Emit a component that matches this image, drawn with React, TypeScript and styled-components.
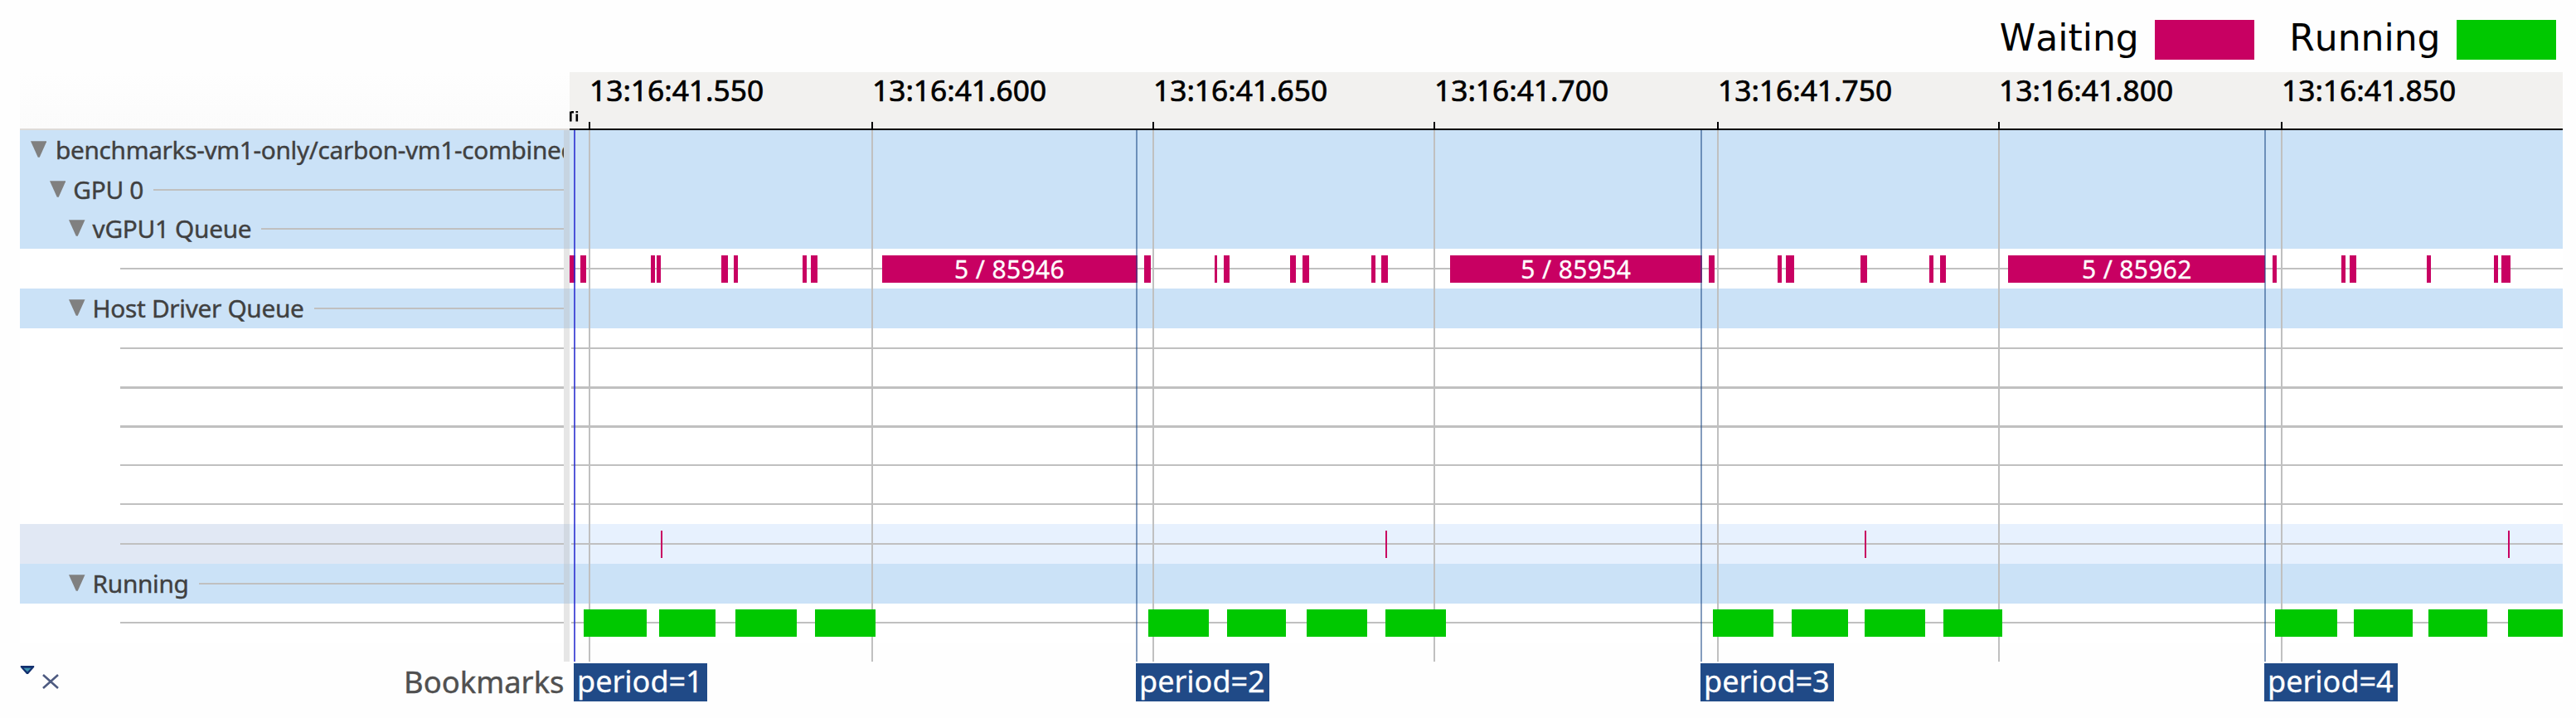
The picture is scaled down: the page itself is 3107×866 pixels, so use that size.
import React from 'react';
import styled, { createGlobalStyle } from 'styled-components';

type Span = [start: number, end: number, label?: string];

interface RowData {
    height: number;
    tone?: 'group' | 'selected';
    level?: number;
    name?: string;
    kind?: 'waiting' | 'running';
    spans?: Span[];
}

const CHART_LEFT = 687;

const WAITING = '#c80062';
const RUNNING = '#00c800';

const TICKS = [
    { at: 711, label: '13:16:41.550' },
    { at: 1052, label: '13:16:41.600' },
    { at: 1391, label: '13:16:41.650' },
    { at: 1730, label: '13:16:41.700' },
    { at: 2072, label: '13:16:41.750' },
    { at: 2411, label: '13:16:41.800' },
    { at: 2752, label: '13:16:41.850' },
];

const BOOKMARKS = [
    { at: 692, label: 'period=1' },
    { at: 1370, label: 'period=2' },
    { at: 2051, label: 'period=3' },
    { at: 2731, label: 'period=4' },
];

const VGPU_SPANS: Span[] = [
    [687, 694], [699.5, 707], [784.5, 789.5], [792, 797], [870, 878], [885, 890],
    [968, 973], [978, 985.5], [1063.5, 1371.5, '5 / 85946'],
    [1380, 1387.5], [1465.3, 1467.7], [1475.5, 1483], [1555.5, 1563], [1571, 1578.5],
    [1654, 1659], [1666, 1674], [1749, 2052.5, '5 / 85954'],
    [2060.5, 2068], [2143.5, 2148.5], [2153.5, 2163.5], [2244, 2251.5], [2327, 2332],
    [2339.5, 2347], [2422.4, 2732.5, '5 / 85962'],
    [2741, 2745.7], [2824, 2829], [2834.4, 2842.3], [2927, 2932], [3007.5, 3012.5], [3017, 3027.5],
];

const HOST_SPANS: Span[] = [
    [797.4, 799.4], [1671.4, 1673.4], [2249, 2251], [3025.4, 3027.4],
];

const RUNNING_SPANS: Span[] = [
    [704, 780.3], [795, 863], [887, 961.3], [983, 1056],
    [1385, 1458], [1480, 1551.4], [1576, 1649], [1671, 1744],
    [2066, 2139], [2161, 2229.4], [2249, 2322], [2344.4, 2415],
    [2743.5, 2819], [2839, 2910], [2929.4, 3000.4], [3025.4, 3091],
];

const ROWS: RowData[] = [
    { height: 48, tone: 'group', level: 0, name: 'benchmarks-vm1-only/carbon-vm1-combined' },
    { height: 47.5, tone: 'group', level: 1, name: 'GPU 0' },
    { height: 47.5, tone: 'group', level: 2, name: 'vGPU1 Queue' },
    { height: 48, kind: 'waiting', spans: VGPU_SPANS },
    { height: 48, tone: 'group', level: 2, name: 'Host Driver Queue' },
    { height: 47.5 },
    { height: 48 },
    { height: 46 },
    { height: 46.5 },
    { height: 48 },
    { height: 48, tone: 'selected', kind: 'waiting', spans: HOST_SPANS },
    { height: 47.5, tone: 'group', level: 2, name: 'Running' },
    { height: 47.5, kind: 'running', spans: RUNNING_SPANS },
];

function App() {
    return (
        <Page>
            <GlobalStyle/>
            <Legend>
                <LegendItem>Waiting<Swatch $color={WAITING}/></LegendItem>
                <LegendItem>Running<Swatch $color={RUNNING}/></LegendItem>
            </Legend>
            <Viewer>
                <Tree>
                    <TreeHeader/>
                    {ROWS.map((row, i) => (
                        <TreeRow key={i} $height={row.height} $tone={row.tone} $level={row.name ? row.level! : 4.65}>
                            {row.name && <Arrow viewBox="0 0 20 20"><path d="M0 0H20L11 20H9Z"/></Arrow>}
                            {row.name && <Name $root={row.level === 0}>{row.name}</Name>}
                            <TreeLine/>
                        </TreeRow>
                    ))}
                </Tree>
                <Sash>
                    <SashHeader/>
                    {ROWS.map((row, i) => <SashCell key={i} $height={row.height} $tone={row.tone}/>)}
                    <SashRest/>
                </Sash>
                <Chart>
                    <TimeAxis>
                        <AxisScrap viewBox="0 0 11 13">
                            <path d="M1.3 12.5V0.5M2 1.2H5M8.8 3.5V12.5M8.8 0V2"/>
                        </AxisScrap>
                        {TICKS.map((tick) => (
                            <Tick key={tick.at} style={{ left: tick.at - CHART_LEFT }}>{tick.label}</Tick>
                        ))}
                    </TimeAxis>
                    <Lanes>
                        {ROWS.map((row, i) => (
                            <Lane key={i} $height={row.height} $tone={row.tone}/>
                        ))}
                        {TICKS.map((tick) => (
                            <GridLine key={tick.at} style={{ left: tick.at - CHART_LEFT - 1 }}/>
                        ))}
                        <States>
                            {ROWS.map((row, i) => (
                                <StateRow key={i} $height={row.height}>
                                    {row.spans?.map(([start, end, label]) => (
                                        <State
                                            key={start}
                                            $kind={row.kind!}
                                            style={{ left: start - CHART_LEFT, width: end - start }}
                                        >
                                            {label}
                                        </State>
                                    ))}
                                </StateRow>
                            ))}
                        </States>
                        {BOOKMARKS.map((mark, i) => (
                            <MarkLine key={mark.at} $current={i === 0} style={{ left: mark.at - CHART_LEFT }}/>
                        ))}
                    </Lanes>
                </Chart>
            </Viewer>
            <Footer>
                <FooterIcons>
                    <MenuIcon viewBox="0 0 18 11">
                        <path d="M0 0H18V2L10 11H8L0 2Z" fill="#13306f"/>
                        <path d="M4 3H14L9 8Z" fill="#3f93b0"/>
                    </MenuIcon>
                    <CloseIcon viewBox="0 0 20 18">
                        <path d="M1 1L19 17M19 1L1 17"/>
                    </CloseIcon>
                </FooterIcons>
                <FooterTitle>Bookmarks</FooterTitle>
                <MarkStrip>
                    {BOOKMARKS.map((mark) => (
                        <Mark key={mark.at} style={{ left: mark.at - CHART_LEFT }}>{mark.label}</Mark>
                    ))}
                </MarkStrip>
            </Footer>
        </Page>
    )
}

const toneColor = (tone?: string) => (
    tone === 'group' ? '#cbe2f7' : tone === 'selected' ? '#e7f1fe' : '#ffffff'
);

const GlobalStyle = createGlobalStyle`
    body {
        margin: 0;
        background-color: #fefefe;
    }
`;

const Page = styled.div`
    display: flex;
    flex-direction: column;

    width: 3107px;
    height: 866px;

    overflow: hidden;
    background-color: #fefefe;
    font-family: 'Noto Sans', 'Open Sans', sans-serif;
    white-space: nowrap;
`;

const Legend = styled.div`
    display: flex;
    justify-content: flex-end;
    gap: 42px;
    box-sizing: border-box;

    height: 87px;
    padding: 24px 24px 0 0;
`;

const LegendItem = styled.div`
    display: flex;
    gap: 19px;

    height: 48px;

    color: #000;
    font: 44px/43px 'DejaVu Sans', sans-serif;
    font-kerning: none;
`;

const Swatch = styled.div<{ $color: string }>`
    width: 120.5px;
    height: 48px;

    background-color: ${({ $color }) => $color};
`;

const Viewer = styled.div`
    display: grid;
    grid-template-columns: 655.5px 7.5px 2404px;

    height: 711px;
    padding-left: 24px;
`;

const Tree = styled.div`
    display: flex;
    flex-direction: column;

    min-width: 0;
`;

const TreeHeader = styled.div`
    flex: none;
    box-sizing: border-box;

    height: 70px;

    border-bottom: 2px solid #dedbd8;
    background: linear-gradient(#fefefe, #fbfbfb);
`;

const TreeRow = styled.div<{ $height: number; $tone?: string; $level: number }>`
    display: flex;
    align-items: center;
    box-sizing: border-box;

    height: ${({ $height }) => $height}px;
    padding-left: ${({ $level }) => 12.5 + $level * 23.3}px;

    overflow: hidden;
    background-color: ${({ $tone }) => $tone === 'selected' ? '#e1e8f4' : toneColor($tone)};
`;

const Arrow = styled.svg`
    flex: none;

    width: 19.5px;
    height: 20px;
    margin: 0 9px 2px 0;

    fill: #808080;
`;

const Name = styled.span<{ $root: boolean }>`
    flex: none;

    margin-left: ${({ $root }) => $root ? 2 : 0}px;
    margin-right: 12px;

    color: #404040;
    font-size: 29.8px;
    line-height: 46px;
    letter-spacing: -0.32px;
    -webkit-text-stroke: 0.4px #404040;
`;

const TreeLine = styled.div`
    flex: 1;

    height: 2.4px;

    background-color: #c0c0c0;
`;

const Sash = styled.div`
    display: flex;
    flex-direction: column;
`;

const SashHeader = styled(TreeHeader)``;

const SashCell = styled.div<{ $height: number; $tone?: string }>`
    height: ${({ $height }) => $height}px;

    background-color: ${({ $tone }) => $tone === 'group' ? '#c6d4e1' : $tone === 'selected' ? '#d2d9e2' : '#e6e6e6'};
`;

const SashRest = styled.div`
    flex: 1;

    background-color: #e6e6e6;
`;

const Chart = styled.div`
    display: flex;
    flex-direction: column;
`;

const TimeAxis = styled.div`
    position: relative;

    box-sizing: border-box;

    height: 70px;

    border-bottom: 2.5px solid #000;
    background-color: #f2f1ef;
`;

const AxisScrap = styled.svg`
    position: absolute;
    top: 47px;
    left: 0;

    width: 11px;
    height: 13px;

    fill: none;
    stroke: #000;
    stroke-width: 2.6;
`;

const Tick = styled.div`
    position: absolute;
    top: 0;

    height: 68px;

    color: #000;
    font-size: 35.3px;
    line-height: 43px;
    -webkit-text-stroke: 0.7px #000;

    &::after {
        content: '';
        position: absolute;
        bottom: 0;
        left: -1px;

        width: 2px;
        height: 8px;

        background-color: #000;
    }
`;

const Lanes = styled.div`
    position: relative;

    flex: 1;

    overflow: hidden;
`;

const Lane = styled.div<{ $height: number; $tone?: string }>`
    display: flex;
    align-items: center;

    height: ${({ $height }) => $height}px;

    background-color: ${({ $tone }) => toneColor($tone)};

    &::before {
        content: '';
        flex: 1;

        height: 2.4px;
        margin-left: 2px;

        background-color: ${({ $tone }) => $tone === 'group' ? 'transparent' : '#c0c0c0'};
    }
`;

const GridLine = styled.div`
    position: absolute;
    top: 0;
    bottom: 0;

    width: 2px;

    background-color: #c0c0c0;
`;

const States = styled.div`
    position: absolute;
    inset: 0;
`;

const StateRow = styled.div<{ $height: number }>`
    position: relative;

    height: ${({ $height }) => $height}px;
`;

const State = styled.div<{ $kind: 'waiting' | 'running' }>`
    position: absolute;
    top: 7.7px;

    height: 33px;

    background-color: ${({ $kind }) => $kind === 'waiting' ? WAITING : RUNNING};
    color: #fff;
    font-size: 30px;
    line-height: 33px;
    letter-spacing: 0.35px;
    text-align: center;
    -webkit-text-stroke: 0.3px #fff;
`;

const MarkLine = styled.div<{ $current: boolean }>`
    position: absolute;
    top: 0;
    bottom: 0;

    width: 2px;

    background-color: ${({ $current }) => $current ? '#2a2fd0' : '#1f4a87'};
    opacity: ${({ $current }) => $current ? 0.8 : 0.55};
`;

const Footer = styled.div`
    display: grid;
    grid-template-columns: 300px 356.5px 2403px;

    height: 46px;
    padding: 2px 0 0 24px;
`;

const FooterIcons = styled.div`
    display: flex;
    align-items: flex-start;
    gap: 9px;

    padding-top: 3px;
`;

const MenuIcon = styled.svg`
    width: 18px;
    height: 10px;
`;

const CloseIcon = styled.svg`
    width: 20px;
    height: 18px;
    margin-top: 10px;

    fill: none;
    stroke: #4d5a80;
    stroke-width: 2.6;
`;

const FooterTitle = styled.div`
    color: #505050;
    font-size: 36.4px;
    line-height: 44px;
    text-align: right;
    -webkit-text-stroke: 0.4px #505050;
`;

const MarkStrip = styled.div`
    position: relative;

    margin-left: 6.5px;
`;

const Mark = styled.div`
    position: absolute;
    top: 0;

    box-sizing: border-box;

    width: 160.5px;
    height: 46px;
    padding-left: 4px;

    background-color: #204a87;
    color: #fff;
    font-size: 36px;
    line-height: 44px;
    -webkit-text-stroke: 0.3px #fff;
`;

export default App;
